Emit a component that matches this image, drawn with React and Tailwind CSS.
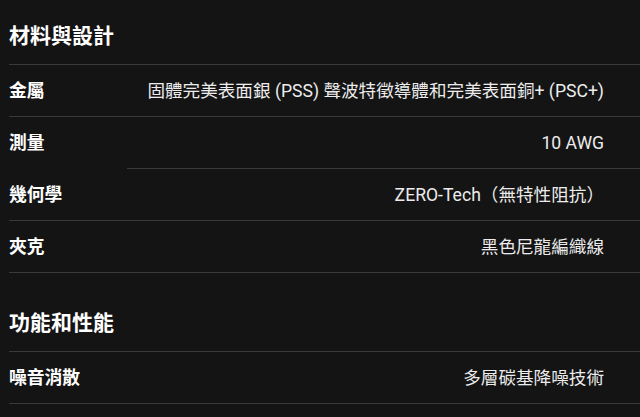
import React from 'react';

const font = { fontFamily: 'Inter, "Noto Sans CJK TC", sans-serif' };
const valueFont = { fontFamily: 'Roboto, "Noto Sans CJK TC", sans-serif' };

const sections = [
  {
    title: '材料與設計',
    rows: [
      { label: '金屬', value: '固體完美表面銀 (PSS) 聲波特徵導體和完美表面銅+ (PSC+)' },
      { label: '測量', value: '10 AWG', shortLine: true },
      { label: '幾何學', value: 'ZERO-Tech（無特性阻抗）' },
      { label: '夾克', value: '黑色尼龍編織線' },
    ],
  },
  {
    title: '功能和性能',
    rows: [{ label: '噪音消散', value: '多層碳基降噪技術' }],
  },
];

function SpecRow({ label, value, shortLine }) {
  return (
    <div className="relative flex h-[52px] items-center justify-between pr-[36px]">
      <span className="text-[17.8px] font-bold text-white">{label}</span>
      <span className="text-[17.6px] text-[#ececec]" style={valueFont}>
        {value}
      </span>
      <div
        className={
          shortLine
            ? 'absolute bottom-0 left-[118px] right-0 h-px bg-[#3a3a3a]'
            : 'absolute bottom-0 left-0 right-0 h-px bg-[#3a3a3a]'
        }
      />
    </div>
  );
}

export default function App() {
  return (
    <div className="min-h-screen bg-[#141414] pl-[9px]" style={font}>
      {sections.map((s, i) => (
        <div key={s.title} className={i > 0 ? 'mt-[14px]' : ''}>
          <h2 className="h-[65px] border-b border-[#3a3a3a] pt-[24px] text-[21px] font-bold leading-[24px] text-white">
            {s.title}
          </h2>
          {s.rows.map((r) => (
            <SpecRow key={r.label} {...r} />
          ))}
        </div>
      ))}
    </div>
  );
}
